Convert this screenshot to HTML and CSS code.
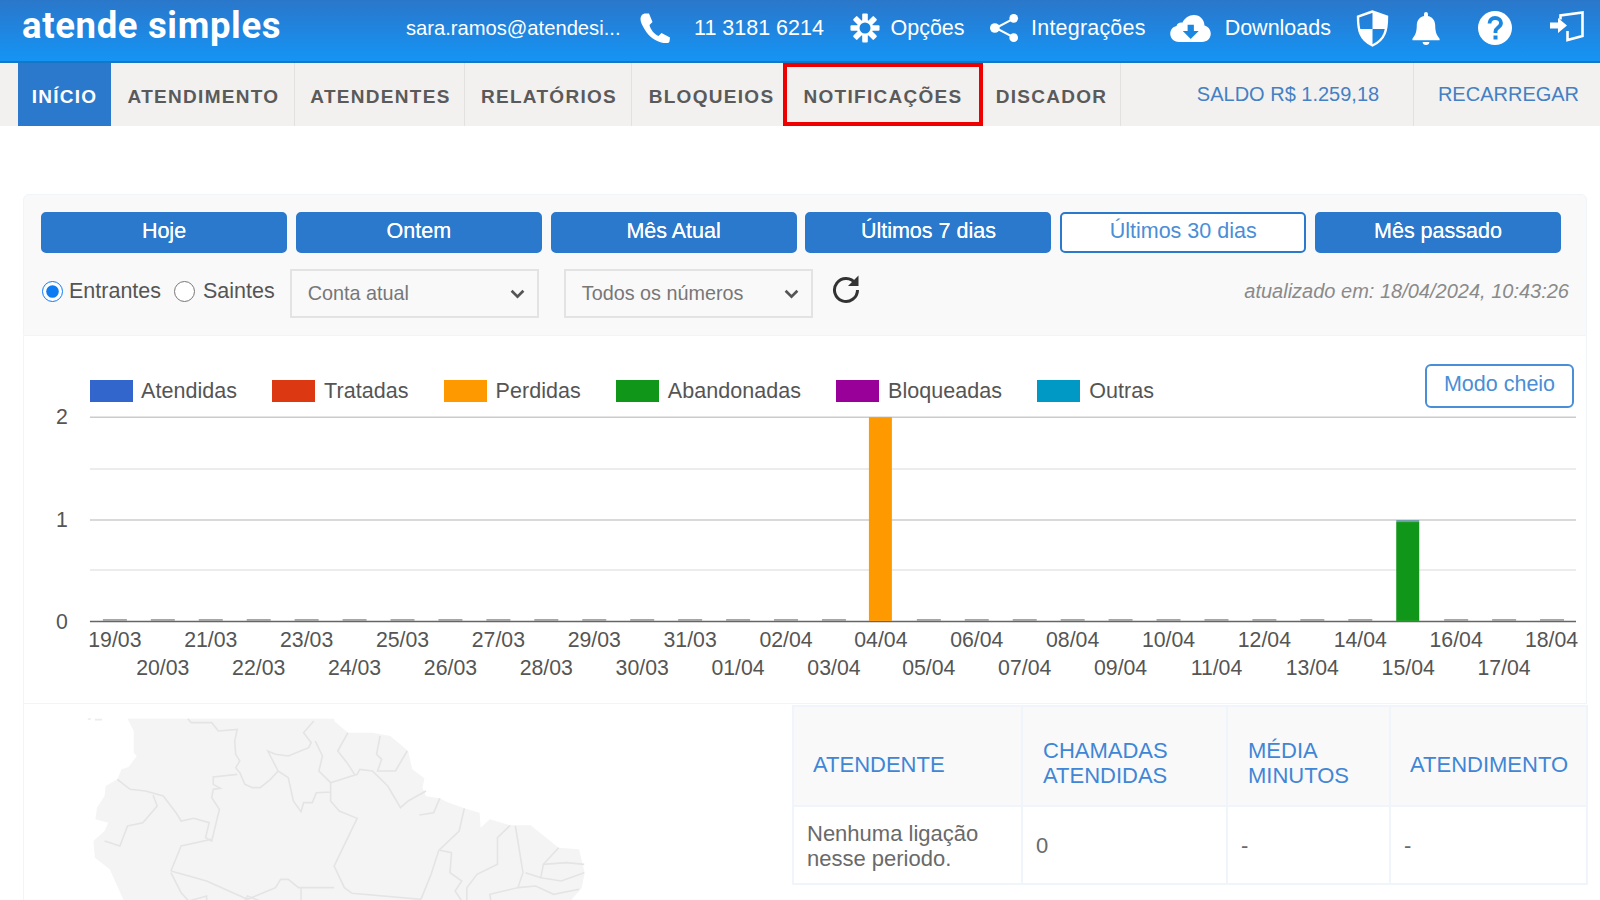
FILE: index.html
```html
<!DOCTYPE html>
<html lang="pt-BR">
<head>
<meta charset="utf-8">
<title>Atende Simples</title>
<link rel="stylesheet" href="styles.css">
</head>
<body>
<header class="topbar">
  <div class="logo">atende simples</div>
  <div class="tools">
    <span class="email">sara.ramos@atendesi...</span>
    <span class="tool tool-phone">
      <svg class="ic-phone" viewBox="0 0 31 30"><path fill="#fff" d="M4.500.500 9 .500l3.500 8.500-3 3c1 4.500 5 9.500 9 11l3-3 8.500 4.500-.5 4c-.5 1.500-2.500 2-4 1.800C17 29.500 9.500 24.500 5 17 1.500 11.500-.5 7 1 3.500 1.500 2 3 .8 4.500.500z"/></svg>
      <span>11 3181 6214</span>
    </span>
    <span class="tool tool-gear">
      <svg class="ic-gear" viewBox="0 0 30 30"><g fill="#fff"><rect x="12.200" y=".5" width="5.600" height="29" rx="1"/><rect x="12.200" y=".5" width="5.600" height="29" rx="1" transform="rotate(45 15 15)"/><rect x="12.200" y=".5" width="5.600" height="29" rx="1" transform="rotate(90 15 15)"/><rect x="12.200" y=".5" width="5.600" height="29" rx="1" transform="rotate(135 15 15)"/></g><circle cx="15" cy="15" r="8" fill="#fff"/><circle cx="15" cy="15" r="5.500" fill="#1c84dc"/></svg>
      <span>Opções</span>
    </span>
    <span class="tool tool-int">
      <svg class="ic-share" viewBox="0 0 30 30"><path d="M24 5.500 6 15l18 9.500" fill="none" stroke="#fff" stroke-width="2.200"/><circle cx="24.500" cy="5" r="4.500" fill="#fff"/><circle cx="5" cy="15" r="5" fill="#fff"/><circle cx="24.500" cy="25" r="4.500" fill="#fff"/></svg>
      <span>Integrações</span>
    </span>
    <span class="tool tool-down">
      <svg class="ic-cloud" viewBox="0 0 42 28"><path fill="#fff" d="M9 28C3.500 28 0 24 0 19.500 0 15.500 2.500 12.500 6.500 11.500 7 9 9.500 7.500 12.500 8 15 3 19.500 0 24.500 0 31 0 35.500 5 35.500 11 39.500 12 42 15.500 42 19.500 42 24.500 38 28 33 28z"/><path fill="#1c87e0" d="M18 10h6.500v6.500h5l-8.300 8.500-8.200-8.500h5z"/></svg>
      <span>Downloads</span>
    </span>
    <span class="icons">
      <svg class="ic-shield" viewBox="0 0 33 37"><path fill="none" stroke="#fff" stroke-width="2.400" d="M16.500 1.500 2 6.500c0 13 1.500 23 14.500 29C29.500 29.500 31 19.500 31 6.500z"/><path fill="#fff" d="M16.500 2V19H30.500C31 15 31 10 31 6.500zM3 19H16.500V35C8 31 4.500 26 3 19z"/></svg>
      <svg class="ic-bell" viewBox="0 0 28 34"><path fill="#fff" d="M14 0c1.200 0 2 .8 2 2v2c5 1 7.500 5 7.500 10 0 6.500 1.500 10 4.500 13.500V29H0v-1.500C3 24 4.500 20.500 4.500 14 4.500 9 7 5 12 4V2c0-1.200.8-2 2-2z"/><path fill="#fff" d="M10.500 31h7c0 2-1.500 3-3.500 3s-3.500-1-3.500-3z"/></svg>
      <svg class="ic-help" viewBox="0 0 34 34"><circle cx="17" cy="17" r="17" fill="#fff"/><path fill="none" stroke="#1c87e0" stroke-width="3.800" d="M11.500 12.500c0-3.500 2.500-5.500 5.500-5.500 3.500 0 6 2 6 5 0 4.500-5.500 4.500-5.500 8.500v1.500"/><rect x="15.500" y="24.500" width="4" height="4" fill="#1c87e0"/></svg>
      <svg class="ic-login" viewBox="0 0 37 31"><path fill="none" stroke="#fff" stroke-width="2.600" d="M12.500 8.500V4.500L34.500 1.500V25L19.500 29V20"/><path fill="#fff" d="M2 11.500h8V7l9 7.500-9 7.500v-4.500H2z"/></svg>
    </span>
  </div>
</header>

<nav class="menu">
  <a class="menu-item active">INÍCIO</a>
  <a class="menu-item nudge">ATENDIMENTO</a>
  <a class="menu-item nudge">ATENDENTES</a>
  <a class="menu-item nudge">RELATÓRIOS</a>
  <a class="menu-item no-rule shifted">BLOQUEIOS</a>
  <a class="menu-item marked">NOTIFICAÇÕES</a>
  <a class="menu-item">DISCADOR</a>
  <a class="menu-item money saldo">SALDO R$ 1.259,18</a>
  <a class="menu-item money no-rule recharge">RECARREGAR</a>
</nav>

<main class="content">
  <section class="filters">
    <div class="periods">
      <button class="period">Hoje</button>
      <button class="period">Ontem</button>
      <button class="period">Mês Atual</button>
      <button class="period">Últimos 7 dias</button>
      <button class="period selected">Últimos 30 dias</button>
      <button class="period">Mês passado</button>
    </div>
    <div class="controls">
      <label class="radio"><input type="radio" name="dir" checked>Entrantes</label>
      <label class="radio"><input type="radio" name="dir">Saintes</label>
      <div class="select"><span>Conta atual</span><svg class="chev" viewBox="0 0 14 9"><path d="M1.500 1.500 7 7l5.500-5.500" fill="none" stroke="#555" stroke-width="2.500"/></svg></div>
      <div class="select"><span>Todos os números</span><svg class="chev" viewBox="0 0 14 9"><path d="M1.500 1.500 7 7l5.500-5.500" fill="none" stroke="#555" stroke-width="2.500"/></svg></div>
      <svg class="ic-refresh" viewBox="0 0 30 30"><path d="M24.500 9.500A11.500 11.500 0 1 0 26.500 16" fill="none" stroke="#333" stroke-width="3"/><path fill="#333" d="M27.500 1.500V12H17z"/></svg>
      <span class="stamp">atualizado em: 18/04/2024, 10:43:26</span>
    </div>
  </section>

  <section class="chart-panel">
    <div class="chart-head">
      <ul class="legend">
        <li class="legend-item first"><i class="swatch c-blue"></i>Atendidas</li>
        <li class="legend-item"><i class="swatch c-red"></i>Tratadas</li>
        <li class="legend-item"><i class="swatch c-orange"></i>Perdidas</li>
        <li class="legend-item"><i class="swatch c-green"></i>Abandonadas</li>
        <li class="legend-item"><i class="swatch c-purple"></i>Bloqueadas</li>
        <li class="legend-item"><i class="swatch c-teal"></i>Outras</li>
      </ul>
      <button class="full">Modo cheio</button>
    </div>
    <svg class="chart" viewBox="23 400 1564 302">
      <g class="grid-major"><line x1="89" x2="1577" y1="417" y2="417"/><line x1="89" x2="1577" y1="520" y2="520"/></g>
      <g class="grid-minor"><line x1="89" x2="1577" y1="469" y2="469"/><line x1="89" x2="1577" y1="570" y2="570"/></g>
      <line class="base" x1="89" x2="1577" y1="621.500" y2="621.500"/>
      <path class="stubs" d="M102 620h24M150 620h24M198 620h24M246 620h24M294 620h24M342 620h24M390 620h24M438 620h24M486 620h24M534 620h24M582 620h24M630 620h24M678 620h24M726 620h24M774 620h24M822 620h24M917 620h24M965 620h24M1013 620h24M1061 620h24M1109 620h24M1157 620h24M1205 620h24M1253 620h24M1301 620h24M1349 620h24M1445 620h24M1493 620h24M1541 620h24"/>
      <rect x="869" y="417" width="23" height="204" fill="#ff9900"/>
      <rect x="1397" y="522" width="23" height="99" fill="#109618"/>
      <rect x="1397" y="520" width="23" height="2" fill="#6f9fa8"/>
      <g class="yl"><text x="61" y="424">2</text><text x="61" y="527">1</text><text x="61" y="629">0</text></g>
      <g class="xl">
        <text x="114" y="647">19/03</text><text x="162" y="675">20/03</text><text x="210" y="647">21/03</text><text x="258" y="675">22/03</text><text x="306" y="647">23/03</text><text x="354" y="675">24/03</text><text x="402" y="647">25/03</text><text x="450" y="675">26/03</text><text x="498" y="647">27/03</text><text x="546" y="675">28/03</text><text x="594" y="647">29/03</text><text x="642" y="675">30/03</text><text x="690" y="647">31/03</text><text x="738" y="675">01/04</text><text x="786" y="647">02/04</text><text x="834" y="675">03/04</text><text x="881" y="647">04/04</text><text x="929" y="675">05/04</text><text x="977" y="647">06/04</text><text x="1025" y="675">07/04</text><text x="1073" y="647">08/04</text><text x="1121" y="675">09/04</text><text x="1169" y="647">10/04</text><text x="1217" y="675">11/04</text><text x="1265" y="647">12/04</text><text x="1313" y="675">13/04</text><text x="1361" y="647">14/04</text><text x="1409" y="675">15/04</text><text x="1457" y="647">16/04</text><text x="1505" y="675">17/04</text><text x="1552.500" y="647">18/04</text>
      </g>
    </svg>
  </section>

  <section class="lower">
    <div class="map-box">
      <svg class="map" viewBox="0 0 1568 630" preserveAspectRatio="none">
        <path class="land" d="M250 83 262 120 262 185 268 195 252 228 238 235 230 265 207 285 205 315 190 350 187 385 212 395 205 420 183 450 186 500 215 535 243 630H1118L1140 592 1146 545 1135 475 1095 470 1040 403 1000 403 960 385 942 410 940 365 910 352 875 332 862 322 835 316 828 290 832 262 808 235 800 180 765 135 730 125 682 125 655 90 655 83Z"/>
        <path class="speck" d="M172 84h6M186 86h14"/>
        <g class="borders">
          <path d="M368 83 375 95 415 95 428 120 465 115 460 150 462 190 470 210 462 230 470 245 480 280 495 290 510 290 530 265 545 240 535 210 525 180 540 190 565 195 605 170 610 155 595 125 615 90"/>
          <path d="M230 265 255 295 285 300 320 315 345 365 355 390 380 382 410 395 403 440 415 450 430 355 415 320 418 295 432 292 418 280 418 258 465 250"/>
          <path d="M300 312 308 345 280 395 250 405 235 465 205 450"/>
          <path d="M545 240 565 260 575 330 590 362 595 335 612 335 620 305 648 303 648 275 625 240 632 195 618 150"/>
          <path d="M648 275 700 250 705 235 730 240 760 285 785 350 800 330 835 300"/>
          <path d="M682 125 662 180 680 215 695 250"/>
          <path d="M745 135 738 190 748 205 740 240 775 240 798 180"/>
          <path d="M648 303 648 330 665 360 700 382 655 525 675 590 690 607 825 625"/>
          <path d="M910 352 900 420 860 478 845 550 825 625"/>
          <path d="M862 478 885 485 882 545 905 570 892 600 905 630"/>
          <path d="M1000 403 975 440 975 520 935 550 915 590 915 630"/>
          <path d="M1010 405 1015 450 1025 545 1015 590 960 610 962 630"/>
          <path d="M1095 470 1065 520 1060 560 1030 545"/>
          <path d="M1065 520 1110 515 1145 520"/>
          <path d="M1060 560 1100 570 1145 545"/>
          <path d="M1015 590 1050 585 1085 610 1135 595"/>
          <path d="M335 540 405 570 485 625 540 590 550 565 565 565 585 590 655 590"/>
          <path d="M590 590V630"/>
          <path d="M335 540 355 465 415 445"/>
          <path d="M335 545 355 605 370 630 405 615 405 630"/>
          <path d="M480 630 485 615 510 630"/>
          <path d="M822 372 850 365 862 322"/>
        </g>
      </svg>
    </div>
    <table class="agents">
      <thead>
        <tr><th class="col1 mid">ATENDENTE</th><th class="col2">CHAMADAS<br>ATENDIDAS</th><th class="col3">MÉDIA<br>MINUTOS</th><th class="col4 mid">ATENDIMENTO</th></tr>
      </thead>
      <tbody>
        <tr><td>Nenhuma ligação<br>nesse periodo.</td><td>0</td><td class="dash">-</td><td class="dash">-</td></tr>
      </tbody>
    </table>
  </section>
</main>
</body>
</html>
```
FILE: styles.css
```css
* { box-sizing: border-box; }
html, body { margin: 0; height: 900px; overflow: hidden; background: #fff; }
body { font-family: "Liberation Sans", Arial, sans-serif; font-size: 21.500px; color: #555; }

.topbar { height: 63px; display: flex; align-items: center; padding: 0 15px 5px 22px; color: #fff;
  background: linear-gradient(#2a77ca, #1594f5); border-bottom: 2px solid #1478c6; }
.logo { font-family: Roboto, "Liberation Sans", sans-serif; font-weight: 700; font-size: 36.500px; letter-spacing: .65px; line-height: 1; margin-top: -3px; }
.tools { margin-left: auto; display: flex; align-items: center; }
.email { font-size: 20.200px; margin-right: 19px; }
.tool { display: flex; align-items: center; gap: 12px; margin-right: 25px; }
.tool-phone { gap: 23.500px; margin-right: 26px; }
.tool-gear { gap: 10.500px; margin-right: 25.500px; }
.tool-int { letter-spacing: .2px; margin-right: 24px; }
.tool-down { gap: 14px; }
.icons { display: flex; align-items: center; margin-left: 0; }
.ic-phone { width: 31px; height: 30px; }
.ic-gear { width: 30px; height: 30px; }
.ic-share { width: 29px; height: 30px; }
.ic-cloud { width: 41px; height: 27px; }
.ic-shield { width: 33px; height: 37px; margin-right: 23px; }
.ic-bell { width: 28px; height: 33px; margin-right: 38px; }
.ic-help { width: 34px; height: 34px; margin-right: 36px; }
.ic-login { width: 37px; height: 31px; margin-top: -3px; }

.menu { height: 63px; display: grid; padding-left: 18px; background: #f2f1f0;
  grid-template-columns: 93px 184px 170px 167px 151px 200px 138px 293px 186px; }
.menu-item { display: flex; align-items: center; justify-content: center; padding-top: 4px;
  font-weight: 700; font-size: 19px; letter-spacing: 1.300px; color: #5a5a5a; border-right: 1px solid #e2e1e0; }
.nudge { padding-left: 2px; }
.no-rule { border-right: 0; }
.shifted { padding-left: 8px; }
.active { background: #2b79cc; color: #fff; border-right: 0; letter-spacing: 1.200px; }
.marked { border: 4px solid #ee0000; padding-top: 4px; }
.money { font-weight: 400; font-size: 20px; letter-spacing: 0; color: #4480c4; padding-top: 0; padding-bottom: 1px; }
.saldo { padding-left: 42px; }
.recharge { padding-left: 3px; }

.content { padding: 68px 13px 0 23px; }
.filters { height: 142px; padding: 17px 26px 0 17px; background: #f9f9f9; border: 1px solid #f0f5fa;
  border-radius: 6px 6px 0 0; }
.periods { display: grid; grid-template-columns: repeat(6, 246px); column-gap: 8.800px; }
.period { height: 41px; padding: 0 0 2px; border: 2px solid #2b79cc; border-radius: 5px; background: #2b79cc; color: #fff;
  font: inherit; font-size: 21.500px; text-shadow: 0 0 .5px #fff; }
.selected { background: #fff; color: #4a8ed6; text-shadow: none; }
.controls { display: flex; align-items: center; margin-top: 16px; height: 49px; }
.radio { display: flex; align-items: center; margin-right: 13px; color: #555; padding-bottom: 4px; }
.radio + .radio { margin-right: 15px; }
.radio input { width: 21px; height: 21px; margin: -1px 6px 0 0; accent-color: #0d7bf2; }
.radio:first-child { padding-left: 1px; }
.radio + .radio input { margin-right: 8px; }
.select { width: 249px; height: 49px; display: flex; align-items: center; justify-content: space-between;
  padding: 0 12px 0 16px; margin-right: 25px; background: #f9f9f9; border: 2px solid #e3e3e3; font-size: 19.800px; color: #777; }
.chev { width: 15px; height: 10px; }
.ic-refresh { width: 30px; height: 30px; margin: -9px 0 0 -7px; }
.stamp { margin-left: auto; margin-right: -9px; padding-bottom: 4px; font-style: italic; font-size: 20px; color: #8a8a8a; }

.chart-panel { height: 368px; border: 1px solid #f0f5fa; border-top: 0; }
.chart-head { display: flex; justify-content: space-between; align-items: flex-start; padding: 28px 12px 0 66px; height: 72px; }
.legend { list-style: none; margin: 15.500px 0 0; padding: 0; display: flex; gap: 35px; }
.legend-item { display: flex; align-items: center; gap: 9px; line-height: 22px; color: #555; letter-spacing: .05px; }
.first { gap: 8px; }
.swatch { display: block; width: 43px; height: 22px; }
.c-blue { background: #3366cc; }
.c-red { background: #dc3912; }
.c-orange { background: #ff9900; }
.c-green { background: #109618; }
.c-purple { background: #990099; }
.c-teal { background: #0099c6; }
.full { width: 149px; height: 44px; padding: 0 0 3px; background: #fff; border: 2px solid #4a8ed6; border-radius: 6px;
  font: inherit; color: #4a8ed6; }
.chart { display: block; width: 1562px; height: 302px; margin-top: -8.500px; }
.chart text { font-size: 21.300px; fill: #555; text-anchor: middle; }
.grid-major line { stroke: #ccc; stroke-width: 1.500px; }
.grid-minor line { stroke: #e6e6e6; stroke-width: 1.500px; }
.base { stroke: #666; stroke-width: 1.500px; }
.stubs { stroke: #a6a6a6; stroke-width: 2px; fill: none; }

.lower { display: flex; align-items: flex-start; height: 197px; border-left: 1px solid #f0f5fa; }
.map-box { width: 768px; flex: none; }
.map { display: block; width: 800px; height: 210px; margin: -13px 0 0 -24px; overflow: hidden; }
.land { fill: #f4f4f4; stroke: none; }
.speck { fill: none; stroke: #ececec; stroke-width: 1.600px; vector-effect: non-scaling-stroke; }
.borders path { fill: none; stroke: #e4e4e4; stroke-width: 1.600px; vector-effect: non-scaling-stroke; }

.agents { width: 794px; flex: none; margin-top: 1px; border-collapse: collapse; table-layout: fixed; font-size: 22px; line-height: 25px; }
.agents th { height: 100px; background: #f9f9f9; font-weight: 400; color: #3f86d6; text-align: left; border: 2px solid #eff5fb; padding: 13px 4px 0 20px; }
.agents td { height: 78px; padding: 1px 4px 0 13px; border: 2px solid #eff5fb; color: #6a6a6a; }
.col1 { width: 229px; }
.col2 { width: 205px; }
.col3 { width: 163px; }
.col4 { width: 197px; }
.agents .mid { padding-top: 16px; padding-left: 19px; }
.dash { color: #777; }
```
